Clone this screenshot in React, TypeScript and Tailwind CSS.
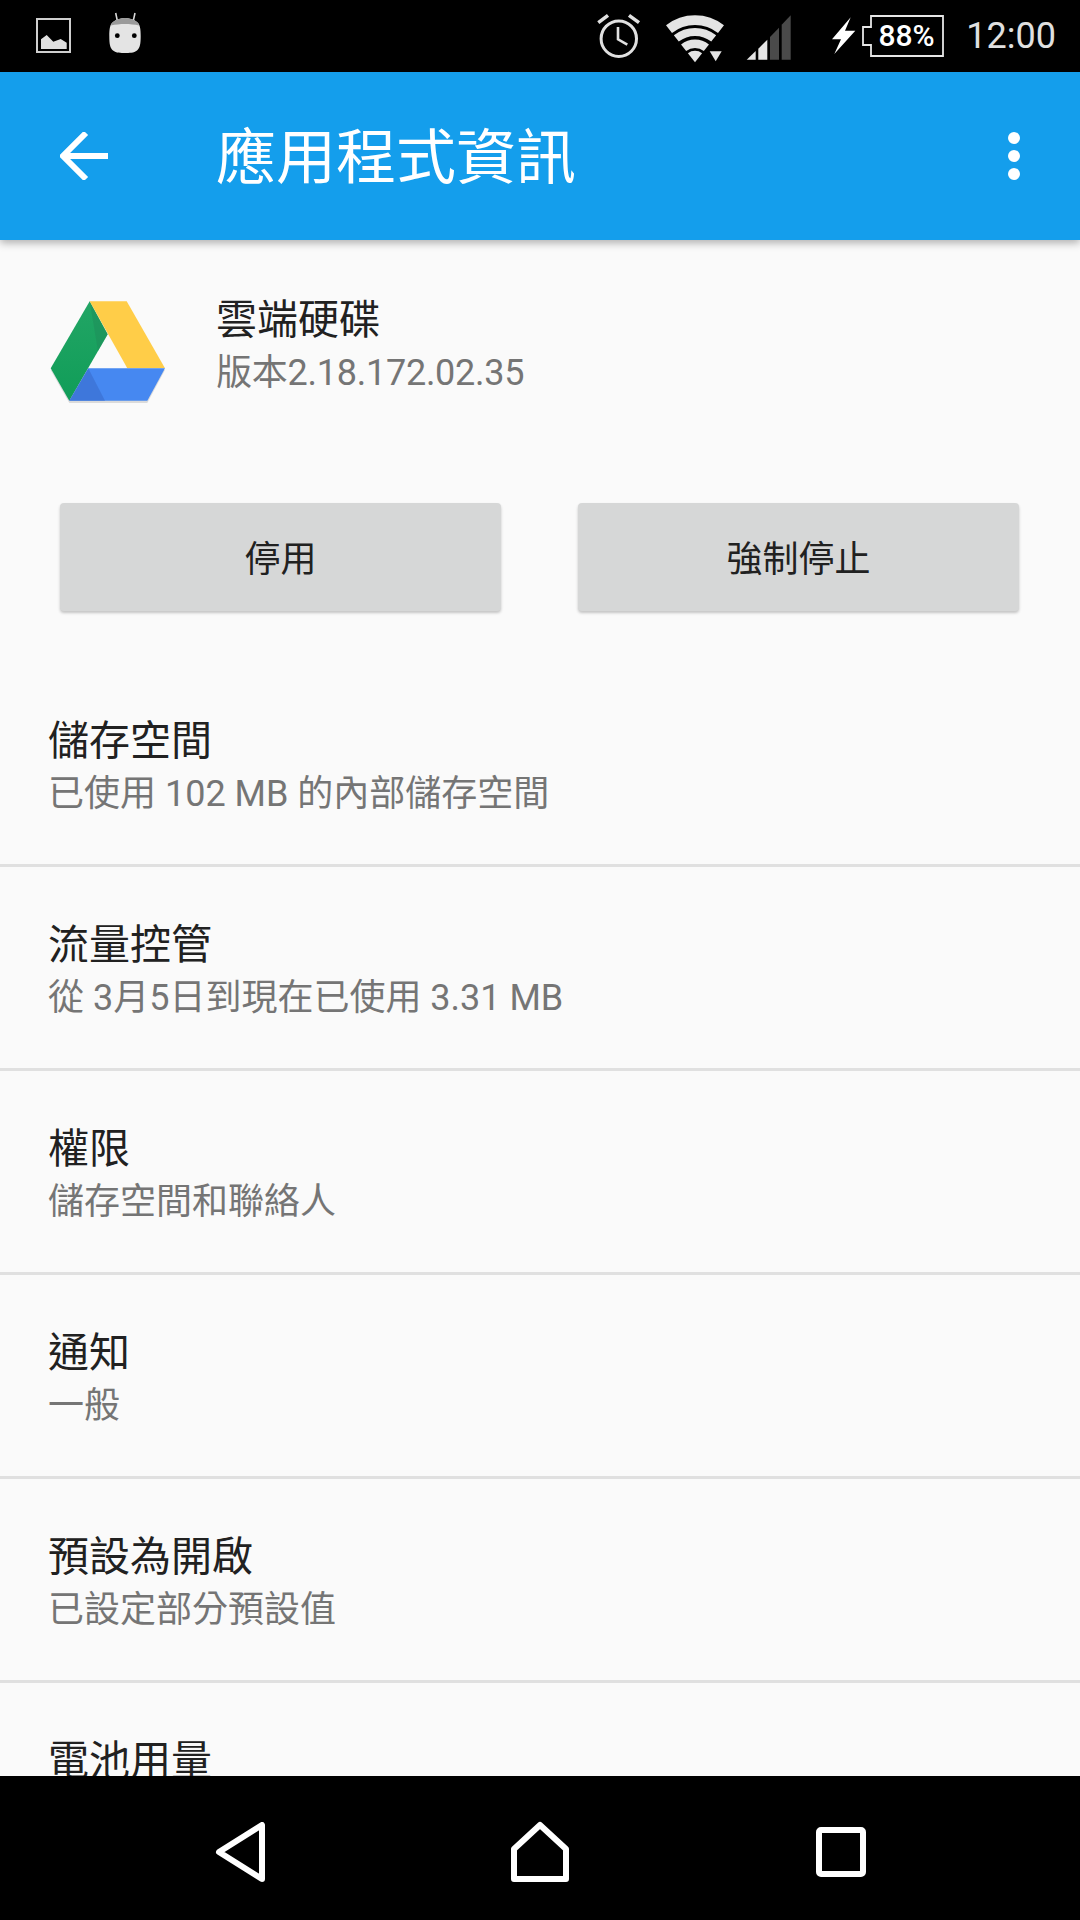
const fontStack = { fontFamily: '"Roboto", "Noto Sans CJK TC", sans-serif' };

const rows = [
  { title: "儲存空間", sub: "已使用 102 MB 的內部儲存空間" },
  { title: "流量控管", sub: "從 3月5日到現在已使用 3.31 MB" },
  { title: "權限", sub: "儲存空間和聯絡人" },
  { title: "通知", sub: "一般" },
  { title: "預設為開啟", sub: "已設定部分預設值" },
  { title: "電池用量", sub: "" },
];

function ImageNotice() {
  return (
    <svg width="36" height="36" viewBox="0 0 36 36">
      <rect x="1" y="1" width="33" height="33" fill="none" stroke="#cfcfcf" strokeWidth="2" />
      <path d="M5 31V21.3L10.7 17L17.3 23.7L24.7 21L30.7 24.7V31Z" fill="#e0e0e0" />
    </svg>
  );
}

function RobotNotice() {
  return (
    <svg width="36" height="42" viewBox="0 0 36 42">
      <path d="M7.7 1L9.3 8.7M27 1L25.3 8.7" stroke="#d8d8d8" strokeWidth="1.6" />
      <path d="M5 10C9 7 13 6 17 6C21 6 25 7 29 10C32 12 32.7 17 32.7 24C32.7 32 32 36 29 38.5C26 41 21 41 17 41C13 41 8 41 5 38.5C2 36 1.3 32 1.3 24C1.3 17 2 12 5 10Z" fill="#e4e4e4" />
      <path d="M5 10C9 7 13 6 17 6C21 6 25 7 29 10C30 10.8 30.7 12 31.2 13.5C22 11.5 12 11.5 2.8 13.5C3.3 12 4 10.8 5 10Z" fill="#9a9a9a" />
      <circle cx="9.3" cy="23.7" r="2.4" fill="#000" />
      <circle cx="26.3" cy="23.7" r="2.4" fill="#000" />
    </svg>
  );
}

function AlarmIcon() {
  return (
    <svg width="46" height="46" viewBox="0 0 46 46" fill="none" stroke="#e0e0e0">
      <circle cx="22.8" cy="25.7" r="17.7" strokeWidth="3" />
      <path d="M22 14V26.3L31.3 31.7" strokeWidth="2.6" />
      <path d="M2.3 9.7L12 2.3M33 2.3L43 9.7" strokeWidth="3.5" />
    </svg>
  );
}

function WifiIcon() {
  return (
    <svg width="60" height="54" viewBox="0 0 60 54" fill="none" stroke="#e4e4e4">
      <path d="M3 20.1A42.2 42.2 0 0 1 55 20.1" strokeWidth="9.7" />
      <path d="M10.3 29.4A30.3 30.3 0 0 1 47.7 29.4" strokeWidth="8" />
      <path d="M17.6 38.7A18.5 18.5 0 0 1 40.4 38.7" strokeWidth="8.3" />
      <path d="M29 53.3L21.9 44.2A11.6 11.6 0 0 1 36.1 44.2Z" fill="#e4e4e4" stroke="none" />
      <path d="M43.7 42.3H55.7L49.7 52.3Z" fill="#e4e4e4" stroke="none" />
    </svg>
  );
}

function SignalIcon() {
  return (
    <svg width="46" height="48" viewBox="0 0 46 48">
      <path d="M0.7 47.7L9.7 39V47.7Z" fill="#e4e4e4" />
      <path d="M12.3 36.7L21.3 27.7V47.7H12.3Z" fill="#e4e4e4" />
      <path d="M24 25L33 15.7V47.7H24Z" fill="#4a4a4a" />
      <path d="M35.7 12.7L44.7 3.3V47.7H35.7Z" fill="#4a4a4a" />
    </svg>
  );
}

function BatteryIcon() {
  return (
    <svg width="112" height="44" viewBox="0 0 112 44">
      <path d="M18.7 3.3L0 25.3H9L2.3 40L23.3 16.7H13Z" fill="#fff" />
      <path d="M39 2H111V42H39V31H31V13H39Z" fill="none" stroke="#e6e6e6" strokeWidth="1.8" />
      <text x="74.5" y="32" textAnchor="middle" fill="#fff" fontSize="30" fontWeight="500" style={fontStack}>88%</text>
    </svg>
  );
}

function DriveLogo() {
  return (
    <svg width="120" height="108" viewBox="48 298 120 108" className="shrink-0">
      <defs>
        <linearGradient id="g1" x1="0" y1="0" x2="0" y2="1">
          <stop offset="0" stopColor="#22a565" />
          <stop offset="1" stopColor="#109d58" />
        </linearGradient>
      </defs>
      <path d="M50.7 370L69.3 403H147.3L165 370Z" fill="#000" opacity="0.12" />
      <path d="M50.7 368.3L89.7 301.3L107.7 334.3L69.3 400.7Z" fill="url(#g1)" />
      <path d="M89.7 301.3L107.7 334.3L98 351Z" fill="#1f8a58" opacity="0.45" />
      <path d="M89.7 301.3H126.7L165 368.3H127.3Z" fill="#ffcd48" />
      <path d="M88.3 368.3H165L147.3 400.7H69.3Z" fill="#4688f1" />
      <path d="M88.3 368.3L69.3 400.7H105Z" fill="#3a6fcf" opacity="0.65" />
    </svg>
  );
}

export default function App() {
  return (
    <div className="w-[1080px] h-[1920px] flex flex-col overflow-hidden bg-[#fafafa]" style={fontStack}>
      {/* Status bar */}
      <div className="h-[72px] bg-black flex items-center shrink-0 pl-[36px] pr-[24px]">
        <ImageNotice />
        <div className="ml-[36px] mt-[-6px]">
          <RobotNotice />
        </div>
        <div className="ml-auto flex items-center">
          <AlarmIcon />
          <div className="ml-[24px]">
            <WifiIcon />
          </div>
          <div className="ml-[20px]">
            <SignalIcon />
          </div>
          <div className="ml-[40px]">
            <BatteryIcon />
          </div>
          <span className="ml-[22px] text-[36px] text-[#e0e0e0] leading-none">12:00</span>
        </div>
      </div>

      {/* App bar */}
      <div className="h-[168px] bg-[#149eec] shrink-0 flex items-center relative z-10 shadow-[0_3px_8px_rgba(0,0,0,0.3)]">
        <svg width="48" height="48" viewBox="0 0 48 48" className="ml-[60px]" fill="none" stroke="#fff" strokeWidth="6">
          <path d="M48 24H3M26 1L3 24L26 47" />
        </svg>
        <span className="ml-[108px] mt-[5px] text-[60px] text-white leading-none">應用程式資訊</span>
        <div className="ml-auto mr-[60px] flex flex-col gap-[6px]">
          <span className="w-[12px] h-[12px] rounded-full bg-white" />
          <span className="w-[12px] h-[12px] rounded-full bg-white" />
          <span className="w-[12px] h-[12px] rounded-full bg-white" />
        </div>
      </div>

      {/* Content */}
      <div className="flex-1 overflow-hidden">
        <div className="flex pl-[48px] pt-[58px] h-[263px]">
          <DriveLogo />
          <div className="ml-[48px] mt-[-5px]">
            <div className="text-[41px] leading-[54px] text-[#212121]">雲端硬碟</div>
            <div className="text-[36px] leading-[52px] text-[#757575] tracking-[-0.25px]">版本2.18.172.02.35</div>
          </div>
        </div>
        <div className="flex justify-between pl-[60px] pr-[61px]">
          <div className="w-[441px] h-[108px] pt-[5px] rounded-[4px] bg-[#d6d7d7] shadow-[0_2px_3px_rgba(0,0,0,0.22)] flex items-center justify-center text-[36px] text-[#212121]">停用</div>
          <div className="w-[441px] h-[108px] pt-[5px] rounded-[4px] bg-[#d6d7d7] shadow-[0_2px_3px_rgba(0,0,0,0.22)] flex items-center justify-center text-[36px] text-[#212121]">強制停止</div>
        </div>
        <div className="mt-[52px]">
          {rows.map((r) => (
            <div key={r.title} className="h-[204px] border-b-[3px] border-[#e0e0e0] pl-[48px] pt-[51px]">
              <div className="text-[41px] leading-[54px] text-[#212121]">{r.title}</div>
              <div className="text-[36px] leading-[52px] text-[#757575]">{r.sub}</div>
            </div>
          ))}
        </div>
      </div>

      {/* Navigation bar */}
      <div className="h-[144px] bg-black shrink-0 flex items-center pt-[8px]">
        <svg width="54" height="60" viewBox="0 0 54 60" className="ml-[214px]" fill="none" stroke="#fff" strokeWidth="6" strokeLinejoin="round">
          <path d="M48 3V57L5 30Z" />
        </svg>
        <svg width="60" height="62" viewBox="0 0 60 62" className="ml-[242px]" fill="none" stroke="#fff" strokeWidth="6" strokeLinejoin="round">
          <path d="M30 4L56 28V58H4V28Z" />
        </svg>
        <svg width="50" height="50" viewBox="0 0 50 50" className="ml-[246px]" fill="none" stroke="#fff" strokeWidth="6" strokeLinejoin="round">
          <rect x="3" y="3" width="44" height="44" rx="2" />
        </svg>
      </div>
    </div>
  );
}
